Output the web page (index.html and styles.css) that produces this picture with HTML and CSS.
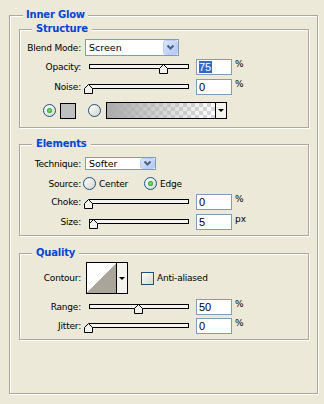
FILE: index.html
```html
<!DOCTYPE html>
<html>
<head>
<meta charset="utf-8">
<link rel="stylesheet" href="styles.css">
</head>
<body>
<div class="dialog">
  <div class="group outer">
    <span class="title">Inner Glow</span>

    <div class="group sub structure">
      <span class="title">Structure</span>
      <div class="row h17">
        <span class="label">Blend Mode:</span>
        <div class="combo combo-blend">
          <span class="combo-text">Screen</span>
          <span class="combo-btn"><svg width="15" height="15" viewBox="0 0 15 15"><defs><linearGradient id="gb1" x1="0" y1="0" x2="1" y2="1"><stop offset="0" stop-color="#DCE6FE"/><stop offset="1" stop-color="#B2C6F4"/></linearGradient></defs><rect x="0.5" y="0.5" width="14" height="14" rx="2" fill="url(#gb1)" stroke="#BCCDF5"/><path d="M4.5 5.5 L7.5 8.5 L10.5 5.5" fill="none" stroke="#4D6185" stroke-width="2"/></svg></span>
        </div>
      </div>
      <div class="row h16 mt3">
        <span class="label">Opacity:</span>
        <div class="slider"><div class="track"></div><svg class="thumb" style="left:70px" width="9" height="10" viewBox="0 0 9 10"><polygon points="0.5,4.5 4.5,0.5 8.5,4.5 8.5,9.5 0.5,9.5" fill="#F3F2EC" stroke="#000"/></svg></div>
        <div class="field"><span class="sel">75</span></div>
        <span class="unit">%</span>
      </div>
      <div class="row h16 mt4">
        <span class="label">Noise:</span>
        <div class="slider"><div class="track"></div><svg class="thumb" style="left:-5px" width="9" height="10" viewBox="0 0 9 10"><polygon points="0.5,4.5 4.5,0.5 8.5,4.5 8.5,9.5 0.5,9.5" fill="#F3F2EC" stroke="#000"/></svg></div>
        <div class="field">0</div>
        <span class="unit">%</span>
      </div>
      <div class="row h17 mt7">
        <svg class="radio first" width="13" height="13" viewBox="0 0 13 13"><defs><linearGradient id="rg1" x1="0" y1="0" x2="1" y2="1"><stop offset="0" stop-color="#FFFFFF"/><stop offset="1" stop-color="#D4D4CC"/></linearGradient><radialGradient id="dot1"><stop offset="0" stop-color="#8FE68F"/><stop offset="1" stop-color="#22A522"/></radialGradient></defs><circle cx="6.5" cy="6.5" r="6" fill="url(#rg1)" stroke="#1C5180"/><circle cx="6.5" cy="6.5" r="2.5" fill="url(#dot1)"/></svg>
        <span class="swatch"></span>
        <svg class="radio second" width="13" height="13" viewBox="0 0 13 13"><defs><linearGradient id="rg2" x1="0" y1="0" x2="1" y2="1"><stop offset="0" stop-color="#FFFFFF"/><stop offset="1" stop-color="#D4D4CC"/></linearGradient></defs><circle cx="6.5" cy="6.5" r="6" fill="url(#rg2)" stroke="#1C5180"/></svg>
        <div class="gradient">
          <span class="gradient-fill"></span>
          <span class="drop"><span class="arrow"></span></span>
        </div>
      </div>
    </div>

    <div class="group sub elements">
      <span class="title">Elements</span>
      <div class="row h13">
        <span class="label">Technique:</span>
        <div class="combo combo-tech">
          <span class="combo-text">Softer</span>
          <span class="combo-btn"><svg width="15" height="11" viewBox="0 0 15 11"><defs><linearGradient id="gb2" x1="0" y1="0" x2="1" y2="1"><stop offset="0" stop-color="#DCE6FE"/><stop offset="1" stop-color="#B2C6F4"/></linearGradient></defs><rect x="0.5" y="0.5" width="14" height="10" rx="2" fill="url(#gb2)" stroke="#BCCDF5"/><path d="M4.5 3.5 L7.5 6.5 L10.5 3.5" fill="none" stroke="#4D6185" stroke-width="2"/></svg></span>
        </div>
      </div>
      <div class="row h13 mt7">
        <span class="label">Source:</span>
        <svg class="radio src" width="13" height="13" viewBox="0 0 13 13"><defs><linearGradient id="rg3" x1="0" y1="0" x2="1" y2="1"><stop offset="0" stop-color="#FFFFFF"/><stop offset="1" stop-color="#D4D4CC"/></linearGradient></defs><circle cx="6.5" cy="6.5" r="6" fill="url(#rg3)" stroke="#1C5180"/></svg>
        <span class="opt center">Center</span>
        <svg class="radio" width="13" height="13" viewBox="0 0 13 13"><defs><linearGradient id="rg4" x1="0" y1="0" x2="1" y2="1"><stop offset="0" stop-color="#FFFFFF"/><stop offset="1" stop-color="#D4D4CC"/></linearGradient><radialGradient id="dot2"><stop offset="0" stop-color="#8FE68F"/><stop offset="1" stop-color="#22A522"/></radialGradient></defs><circle cx="6.5" cy="6.5" r="6" fill="url(#rg4)" stroke="#1C5180"/><circle cx="6.5" cy="6.5" r="2.5" fill="url(#dot2)"/></svg>
        <span class="opt">Edge</span>
      </div>
      <div class="row h16 mt4">
        <span class="label">Choke:</span>
        <div class="slider"><div class="track"></div><svg class="thumb" style="left:-5px" width="9" height="10" viewBox="0 0 9 10"><polygon points="0.5,4.5 4.5,0.5 8.5,4.5 8.5,9.5 0.5,9.5" fill="#F3F2EC" stroke="#000"/></svg></div>
        <div class="field">0</div>
        <span class="unit">%</span>
      </div>
      <div class="row h16 mt4">
        <span class="label">Size:</span>
        <div class="slider"><div class="track"></div><svg class="thumb" style="left:0px" width="9" height="10" viewBox="0 0 9 10"><polygon points="0.5,4.5 4.5,0.5 8.5,4.5 8.5,9.5 0.5,9.5" fill="#F3F2EC" stroke="#000"/></svg></div>
        <div class="field">5</div>
        <span class="unit">px</span>
      </div>
    </div>

    <div class="group sub quality">
      <span class="title">Quality</span>
      <div class="row h32">
        <span class="label">Contour:</span>
        <div class="contour">
          <span class="contour-preview"></span>
          <span class="drop"><span class="arrow"></span></span>
        </div>
        <span class="check"></span>
        <span class="opt">Anti-aliased</span>
      </div>
      <div class="row h16 mt5">
        <span class="label">Range:</span>
        <div class="slider"><div class="track"></div><svg class="thumb" style="left:45px" width="9" height="10" viewBox="0 0 9 10"><polygon points="0.5,4.5 4.5,0.5 8.5,4.5 8.5,9.5 0.5,9.5" fill="#F3F2EC" stroke="#000"/></svg></div>
        <div class="field">50</div>
        <span class="unit">%</span>
      </div>
      <div class="row h16 mt3">
        <span class="label">Jitter:</span>
        <div class="slider"><div class="track"></div><svg class="thumb" style="left:-5px" width="9" height="10" viewBox="0 0 9 10"><polygon points="0.5,4.5 4.5,0.5 8.5,4.5 8.5,9.5 0.5,9.5" fill="#F3F2EC" stroke="#000"/></svg></div>
        <div class="field">0</div>
        <span class="unit">%</span>
      </div>
    </div>
  </div>
</div>
</body>
</html>
```

FILE: styles.css
```css
* { box-sizing: border-box; }
html, body { margin: 0; padding: 0; }
body {
  background: #ECE9D8;
  font-family: "DejaVu Sans", "Liberation Sans", sans-serif;
  font-size: 9px;
  color: #000;
  width: 324px;
  height: 404px;
  overflow: hidden;
}
.dialog { padding: 15px 0 0 9px; }

.group {
  position: relative;
  border: 1px solid #ACA899;
  box-shadow: inset 1px 1px 0 #fff, 1px 1px 0 #fff;
}
.outer { width: 309px; height: 379px; padding: 13px 0 0 9px; }
.sub { width: 290px; }
.structure { padding: 9px 0 8px 0; }
.elements { margin-top: 16px; padding: 12px 0 5px 0; }
.quality { margin-top: 17px; padding: 8px 0 5px 0; }

.title {
  position: absolute;
  top: -7px;
  left: 13px;
  padding: 0 3px;
  background: #ECE9D8;
  font: bold 10px/12px "DejaVu Sans", sans-serif;
  letter-spacing: -0.2px;
  color: #0046D5;
}
.sub > .title { left: 12px; padding: 0 4px; }

.row { display: flex; align-items: center; }
.h13 { height: 13px; }
.h16 { height: 16px; }
.h17 { height: 17px; }
.h32 { height: 32px; }
.mt3 { margin-top: 3px; }
.mt4 { margin-top: 4px; }
.mt5 { margin-top: 5px; }
.mt7 { margin-top: 7px; }

.label {
  flex: none;
  width: 61px;
  text-align: right;
  letter-spacing: -0.2px;
  white-space: nowrap;
}

.combo {
  display: flex;
  align-items: center;
  margin-left: 4px;
  height: 100%;
  border: 1px solid #7F9DB9;
  background: #fff;
}
.combo-blend { width: 94px; }
.combo-tech { width: 71px; }
.combo-text {
  flex: 1;
  padding-left: 3px;
  font-size: 9.5px;
}
.combo-btn { display: flex; margin-right: 0; }
.combo-btn svg { display: block; }

.slider {
  position: relative;
  flex: none;
  width: 100px;
  height: 100%;
  margin-left: 8px;
}
.track {
  margin-top: 5px;
  height: 5px;
  border: 1px solid #000;
  background: #F5F4EF;
}
.thumb { position: absolute; top: 5px; display: block; }

.field {
  flex: none;
  width: 36px;
  height: 16px;
  margin-left: 7px;
  padding-left: 2px;
  border: 1px solid #7F9DB9;
  background: #fff;
  font: 11px/14px "Liberation Sans", sans-serif;
}
.sel { background: #316AC5; color: #fff; padding: 0 1px 0 0; display: inline-block; line-height: 12px; margin-top: 1px; }
.unit {
  align-self: flex-start;
  margin-left: 3px;
  font-size: 9px;
  line-height: 10px;
}

.radio { display: block; flex: none; }
.radio.first { margin-left: 23px; }
.radio.second { margin-left: 12px; }
.radio.src { margin-left: 2px; }
.swatch {
  flex: none;
  width: 16px;
  height: 16px;
  margin-left: 4px;
  background: #C0C0C0;
  border: 1px solid #000;
}
.gradient {
  flex: none;
  display: flex;
  width: 121px;
  height: 17px;
  margin-left: 5px;
  border: 1px solid #000;
  background-color: #fff;
  background-image:
    linear-gradient(45deg, #D8D8D8 25%, transparent 25%, transparent 75%, #D8D8D8 75%),
    linear-gradient(45deg, #D8D8D8 25%, transparent 25%, transparent 75%, #D8D8D8 75%);
  background-size: 8px 8px;
  background-position: 0 0, 4px 4px;
}
.gradient-fill {
  flex: 1;
  background: linear-gradient(to right, #ABABAB, rgba(171,171,171,0));
}
.drop {
  flex: none;
  display: flex;
  align-items: center;
  justify-content: center;
  width: 11px;
  border-left: 1px solid #000;
  background: #F4F3EE;
}
.arrow {
  width: 0;
  height: 0;
  border-left: 3px solid transparent;
  border-right: 3px solid transparent;
  border-top: 3px solid #000;
}

.opt { margin-left: 3px; white-space: nowrap; letter-spacing: -0.2px; }
.opt.center { width: 45px; flex: none; }

.contour {
  flex: none;
  display: flex;
  width: 42px;
  height: 32px;
  margin-left: 5px;
  border: 1px solid #000;
}
.contour-preview {
  flex: 1;
  background: linear-gradient(to bottom right, #fff 50%, #A9A699 50%);
}
.contour .drop { width: 11px; }
.check {
  flex: none;
  width: 13px;
  height: 13px;
  margin-left: 13px;
  border: 1px solid #1C5180;
  background: linear-gradient(135deg, #FFFFFF, #D8D7CE);
}
```
